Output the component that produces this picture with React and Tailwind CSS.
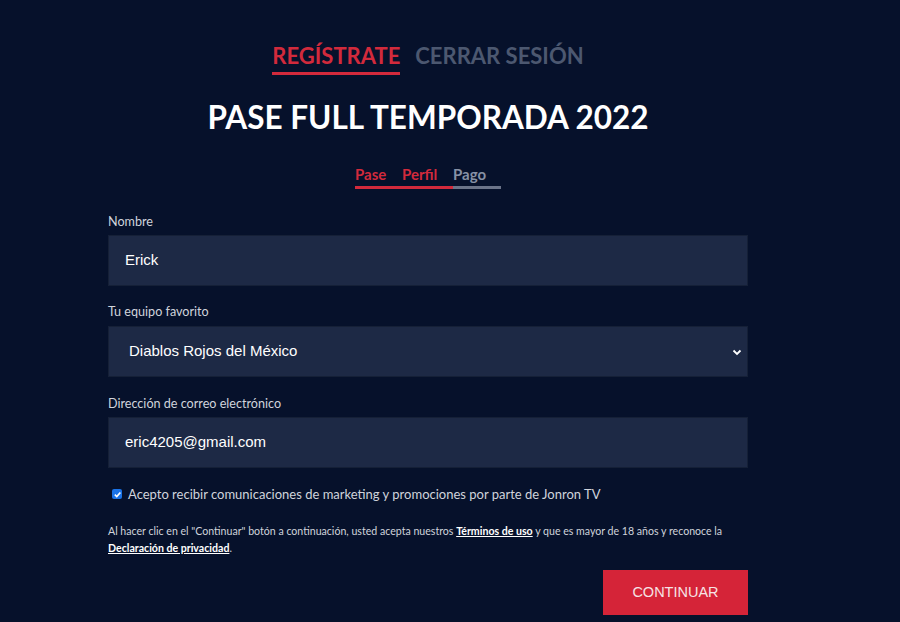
import React from "react";

export default function App() {
  return (
    <div className="w-[900px] h-[622px] overflow-hidden bg-[#06112b] font-['Lato',sans-serif]">
      <div className="ml-[108px] w-[640px] flex flex-col">
        <div className="flex justify-center gap-[15px] pt-[40px]">
          <div className="flex flex-col">
            <span className="text-[22px] font-bold text-[#d22a3c] leading-[32px]">REGÍSTRATE</span>
            <span className="h-[3px] bg-[#d22a3c]"></span>
          </div>
          <div className="flex flex-col">
            <span className="text-[22px] font-bold text-[#4c5870] leading-[32px]">CERRAR SESIÓN</span>
          </div>
        </div>
        <h1 className="text-center text-white font-bold text-[31.5px] leading-[40px] mt-[22px]">PASE FULL TEMPORADA 2022</h1>
        <div className="flex justify-center mt-[27px]">
          <div className="flex flex-col">
            <div className="flex text-[15px] font-bold leading-[20px]">
              <span className="text-[#d22a3c] w-[47px]">Pase</span>
              <span className="text-[#d22a3c] w-[51px]">Perfil</span>
              <span className="text-[#8791a5] w-[48px]">Pago</span>
            </div>
            <div className="flex h-[3px] mt-[2px]">
              <span className="w-[98px] bg-[#d22a3c]"></span>
              <span className="w-[48px] bg-[#6b7489]"></span>
            </div>
          </div>
        </div>
        <div className="mt-[25px] flex flex-col">
          <label className="text-[12.6px] text-[#d0d4dc] leading-[16px]">Nombre</label>
          <div className="mt-[5px] h-[51px] bg-[#1d2945] border border-[#152037] flex items-center pl-[16px] font-['Liberation_Sans',Arial,sans-serif] text-[15px] text-white">Erick</div>
          <label className="mt-[18px] text-[12.6px] text-[#d0d4dc] leading-[16px]">Tu equipo favorito</label>
          <div className="mt-[6px] h-[51px] bg-[#1d2945] border border-[#152037] flex items-center justify-between pl-[20px] pr-[4px] font-['Liberation_Sans',Arial,sans-serif] text-[15px] text-white">
            <span>Diablos Rojos del México</span>
            <svg width="12" height="12" viewBox="0 0 12 12"><path d="M2.5 4.5 L6 8 L9.5 4.5" fill="none" stroke="white" strokeWidth="1.8"/></svg>
          </div>
          <label className="mt-[19px] text-[12.6px] text-[#d0d4dc] leading-[16px]">Dirección de correo electrónico</label>
          <div className="mt-[5px] h-[51px] bg-[#1d2945] border border-[#152037] flex items-center pl-[16px] font-['Liberation_Sans',Arial,sans-serif] text-[15px] text-white">eric4205@gmail.com</div>
          <div className="mt-[17px] h-[18px] flex items-center">
            <span className="ml-[4px] w-[10px] h-[10px] bg-[#1a73e8] rounded-[2px] flex items-center justify-center">
              <svg width="9" height="9" viewBox="0 0 10 10"><path d="M2 5.2 L4.2 7.3 L8.2 2.7" fill="none" stroke="white" strokeWidth="1.8"/></svg>
            </span>
            <span className="ml-[6px] text-[13px] text-[#d0d4dc] leading-[18px]">Acepto recibir comunicaciones de marketing y promociones por parte de Jonron TV</span>
          </div>
          <p className="mt-[19.5px] text-[10.6px] leading-[17px] text-[#d0d4dc]">
            Al hacer clic en el "Continuar" botón a continuación, usted acepta nuestros <span className="font-bold text-white underline">Términos de uso</span> y que es mayor de 18 años y reconoce la <span className="font-bold text-white underline">Declaración de privacidad</span>.
          </p>
          <div className="flex justify-end mt-[13.5px]">
            <button className="w-[145px] h-[45px] bg-[#d52438] text-[#f6e3e5] font-['Liberation_Sans',Arial,sans-serif] text-[14.5px]">CONTINUAR</button>
          </div>
        </div>
      </div>
    </div>
  );
}
